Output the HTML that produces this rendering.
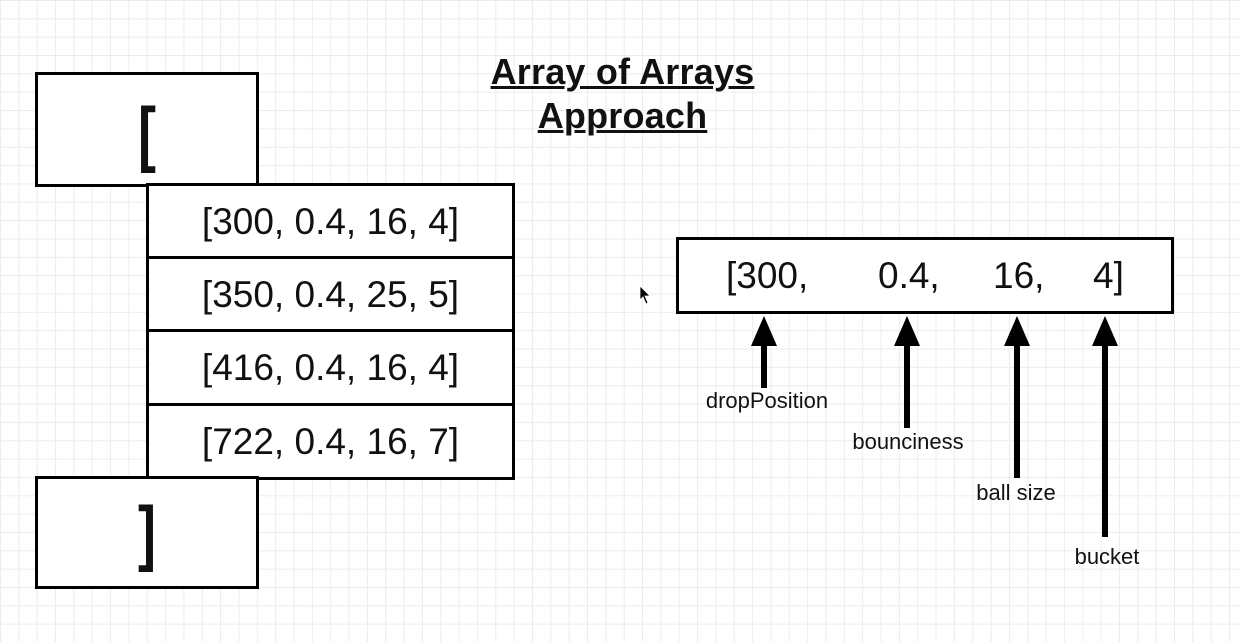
<!DOCTYPE html>
<html><head><style>
body{margin:0;width:1241px;height:642px;overflow:hidden;background:#fff;
background-image:linear-gradient(#ececec 1px,transparent 1px),linear-gradient(90deg,#ececec 1px,transparent 1px);
background-size:18.35px 18.35px;background-position:0 0;font-family:"Liberation Sans",sans-serif;position:relative}
.b{position:absolute;border:3px solid #000;background:#fff;box-sizing:border-box;display:flex;align-items:center;justify-content:center;color:#111}
.r{font-size:37px}
.t{position:absolute;font-weight:bold;font-size:36px;letter-spacing:0.2px;text-decoration:underline;text-decoration-thickness:3px;text-align:center;color:#111}
.l{position:absolute;font-size:22px;color:#111;transform:translateX(-50%);white-space:nowrap}
.br{display:inline-block;transform:scaleX(0.75);position:relative}
</style></head><body>
<div class="t" style="left:440px;top:50px;width:365px;line-height:44px">Array of Arrays<br>Approach</div>
<div class="b" style="left:35px;top:72px;width:224px;height:115px;font-size:72px;font-weight:bold"><span class="br" style="top:4px">[</span></div>
<div class="b r" style="left:146px;top:183px;width:369px;height:77px">[300, 0.4, 16, 4]</div>
<div class="b r" style="left:146px;top:256px;width:369px;height:77px">[350, 0.4, 25, 5]</div>
<div class="b r" style="left:146px;top:329px;width:369px;height:78px">[416, 0.4, 16, 4]</div>
<div class="b r" style="left:146px;top:403px;width:369px;height:77px">[722, 0.4, 16, 7]</div>
<div class="b" style="left:35px;top:476px;width:224px;height:113px;font-size:72px;font-weight:bold"><span class="br" style="top:0px">]</span></div>
<div class="b" style="left:676px;top:237px;width:498px;height:77px;justify-content:flex-start;font-size:37px">
<span style="position:absolute;left:47px">[300,</span><span style="position:absolute;left:199px">0.4,</span><span style="position:absolute;left:314px">16,</span><span style="position:absolute;left:414px">4]</span></div>
<svg style="position:absolute;left:0;top:0" width="1241" height="642">
<g fill="#000">
<rect x="761" y="340" width="6" height="48"/><polygon points="751,346 764,316 777,346"/>
<rect x="904" y="340" width="6" height="88"/><polygon points="894,346 907,316 920,346"/>
<rect x="1014" y="340" width="6" height="138"/><polygon points="1004,346 1017,316 1030,346"/>
<rect x="1102" y="340" width="6" height="197"/><polygon points="1092,346 1105,316 1118,346"/>
<polygon points="640,286 640,300 643,297 646,304 648,303 645,296 650,296" stroke="#fff" stroke-width="0.8"/>
</g></svg>
<div class="l" style="left:767px;top:388px">dropPosition</div>
<div class="l" style="left:908px;top:429px">bounciness</div>
<div class="l" style="left:1016px;top:480px">ball size</div>
<div class="l" style="left:1107px;top:544px">bucket</div>
</body></html>
